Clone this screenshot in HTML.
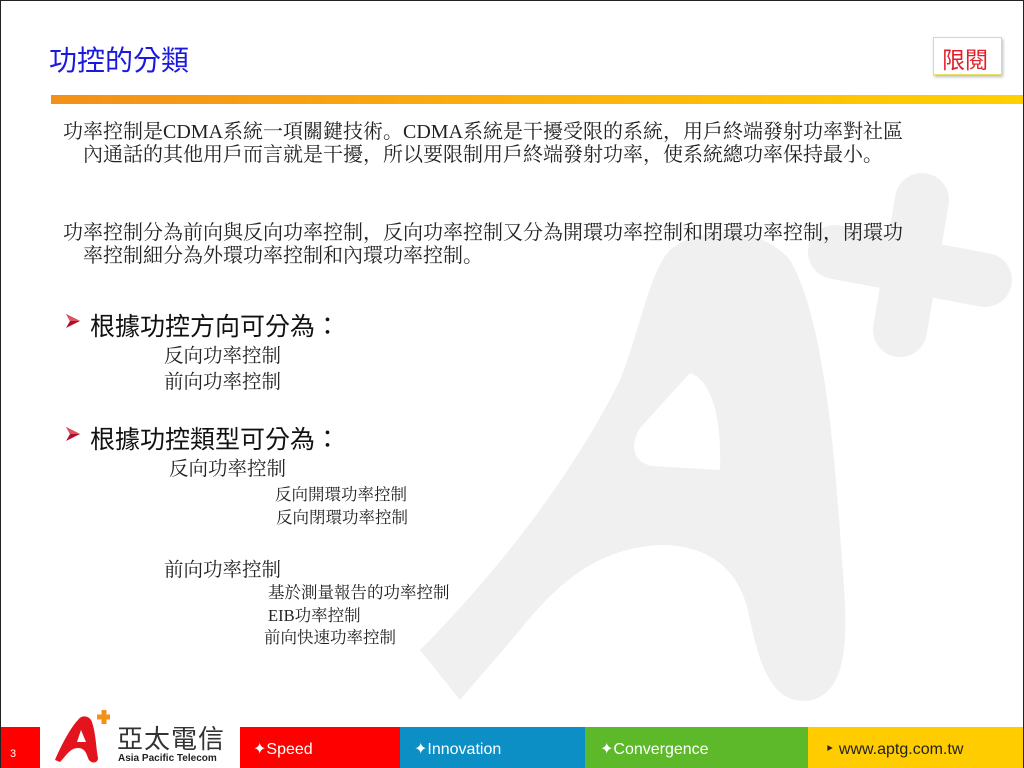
<!DOCTYPE html>
<html><head><meta charset="utf-8"><style>
*{margin:0;padding:0;box-sizing:border-box}
body{width:1024px;height:768px;position:relative;overflow:hidden;background:#fff;font-family:"Liberation Serif","Noto Serif CJK SC","Noto Sans CJK TC",serif;color:#000}
.frame{position:absolute;inset:0;border:1px solid #222;border-bottom:none;pointer-events:none;z-index:5}
.t{position:absolute;white-space:nowrap}
.s{font-family:"Liberation Sans","Noto Sans CJK TC",sans-serif}
.bar{position:absolute;top:727px;height:41px}
.ft{font-family:"Liberation Sans","DejaVu Sans",sans-serif;color:#fff;font-size:16px;position:absolute;top:739px}
.ar{position:absolute}
</style></head><body>
<div class="frame"></div>
<svg style="position:absolute;left:0;top:0" width="1024" height="768">
<path fill="#f0f0f0" fill-rule="evenodd" d="M420 650 C470 600 560 500 620 380 C640 330 650 270 670 250 C700 225 760 225 790 260 C825 320 835 460 842 560 C848 630 850 690 812 700 C770 708 758 660 748 610 C738 570 710 545 660 545 C600 548 560 580 520 630 L460 700 Z M690 373 C712 380 722 420 720 470 L652 466 C632 462 630 445 640 428 Z"/>
<line x1="922" y1="200" x2="900" y2="330" stroke="#f0f0f0" stroke-width="54" stroke-linecap="round"/>
<line x1="835" y1="252" x2="985" y2="280" stroke="#f0f0f0" stroke-width="54" stroke-linecap="round"/>
</svg>
<div class="t s" style="left:49px;top:39px;font-size:28px;color:#1a1adf">功控的分類</div>
<div style="position:absolute;left:933px;top:37px;width:69px;height:38px;border:1px solid #e8e060;box-shadow:1px 2px 3px #bbb;background:#fff"></div>
<div class="t s" style="left:942px;top:41px;font-size:23px;color:#e0202a">限閱</div>
<div style="position:absolute;left:51px;top:95px;width:973px;height:9px;background:linear-gradient(90deg,#f39019,#fbb10c 50%,#ffd000)"></div>
<div class="t" style="left:63px;top:121px;font-size:20px;line-height:23px;color:#222">功率控制是CDMA系統一項關鍵技術。CDMA系統是干擾受限的系統，用戶終端發射功率對社區<br>&nbsp;&nbsp;&nbsp;&nbsp;內通話的其他用戶而言就是干擾，所以要限制用戶終端發射功率，使系統總功率保持最小。</div>
<div class="t" style="left:63px;top:222px;font-size:20px;line-height:23px;color:#222">功率控制分為前向與反向功率控制，反向功率控制又分為開環功率控制和閉環功率控制，閉環功<br>&nbsp;&nbsp;&nbsp;&nbsp;率控制細分為外環功率控制和內環功率控制。</div>
<svg class="ar" style="left:65px;top:313px" width="16" height="16"><path d="M1 1 L15 8 L1 15 L5 8 Z" fill="#b0102a"/><path d="M1 1 L15 8 L5 8 Z" fill="#e05060"/></svg>
<div class="t s" style="left:90px;top:307px;font-size:25px;color:#111">根據功控方向可分為：</div>
<div class="t" style="left:164px;top:340px;font-size:19.5px;color:#222">反向功率控制</div>
<div class="t" style="left:164px;top:366px;font-size:19.5px;color:#222">前向功率控制</div>
<svg class="ar" style="left:65px;top:426px" width="16" height="16"><path d="M1 1 L15 8 L1 15 L5 8 Z" fill="#b0102a"/><path d="M1 1 L15 8 L5 8 Z" fill="#e05060"/></svg>
<div class="t s" style="left:90px;top:420px;font-size:25px;color:#111">根據功控類型可分為：</div>
<div class="t" style="left:169px;top:453px;font-size:19.5px;color:#222">反向功率控制</div>
<div class="t" style="left:275px;top:481px;font-size:16.5px;color:#222">反向開環功率控制</div>
<div class="t" style="left:276px;top:504px;font-size:16.5px;color:#222">反向閉環功率控制</div>
<div class="t" style="left:164px;top:554px;font-size:19.5px;color:#222">前向功率控制</div>
<div class="t" style="left:268px;top:579px;font-size:16.5px;color:#222">基於測量報告的功率控制</div>
<div class="t" style="left:268px;top:602px;font-size:16.5px;color:#222">EIB功率控制</div>
<div class="t" style="left:264px;top:624px;font-size:16.5px;color:#222">前向快速功率控制</div>
<div class="bar" style="left:0;width:40px;background:#f00"></div>
<div class="bar" style="left:240px;width:160px;background:#f00"></div>
<div class="bar" style="left:400px;width:185px;background:#0b8fc4"></div>
<div class="bar" style="left:585px;width:223px;background:#5db82a"></div>
<div class="bar" style="left:808px;width:216px;background:#ffcc00"></div>
<div class="t s" style="left:10px;top:748px;font-size:11px;color:#fff">3</div>
<svg style="position:absolute;left:50px;top:708px" width="60" height="58">
<path d="M5 52 C10 40 20 20 28 12 C32 6 40 8 42 14 C46 26 46 40 48 50 C48 56 40 56 38 50 C36 44 34 40 28 40 C20 40 16 48 10 54 Z" fill="#e4141e"/>
<path d="M31 22 L36 34 L27 34 Z" fill="#fff"/>
<path d="M54 2 v14 M47 9 h14" stroke="#f39019" stroke-width="5"/>
</svg>
<div class="t s" style="left:117px;top:719px;font-size:26px;color:#333;letter-spacing:1px">亞太電信</div>
<div class="t s" style="left:118px;top:753px;font-size:10px;color:#222;font-weight:bold">Asia Pacific Telecom</div>
<div class="ft" style="left:253px">✦Speed</div>
<div class="ft" style="left:414px">✦Innovation</div>
<div class="ft" style="left:600px">✦Convergence</div>
<div class="ft" style="left:825px;color:#222">‣ www.aptg.com.tw</div>
</body></html>
